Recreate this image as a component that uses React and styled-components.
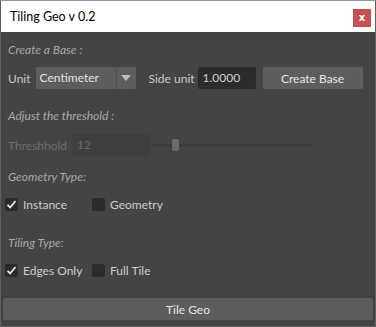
import React from 'react';
import styled, { createGlobalStyle } from 'styled-components';

const GlobalStyle = createGlobalStyle`
  html, body {
    margin: 0;
    padding: 0;
    background: #444444;
  }
  body {
    font-family: Lato, "Open Sans", sans-serif;
  }
`;

const Window = styled.div`
  box-sizing: border-box;
  width: 376px;
  height: 327px;
  display: flex;
  flex-direction: column;
  border: 1px solid #5f5f5f;
  border-top-color: #8a97a4;
  background: #444444;
  overflow: hidden;
`;

const TitleBar = styled.div`
  height: 31px;
  flex: none;
  background: #ffffff;
  display: flex;
  align-items: center;
  justify-content: space-between;
  padding: 0 4px 0 9px;
`;

const Title = styled.span`
  font-family: Lato, sans-serif;
  font-size: 12.5px;
  color: #000000;
`;

const CloseButton = styled.div`
  width: 18px;
  height: 18px;
  margin-top: 2px;
  background: #c75050;
  color: #ffffff;
  font-family: "DejaVu Sans", sans-serif;
  font-weight: bold;
  font-size: 10px;
  display: flex;
  align-items: center;
  justify-content: center;
`;

const Body = styled.div`
  flex: 1;
  display: flex;
  flex-direction: column;
  padding: 9px 2px 6px 2px;
`;

const SectionLabel = styled.div`
  font-style: italic;
  font-size: 12px;
  color: #a9a9a9;
  padding-left: 5px;
  height: 18px;
  line-height: 18px;
  margin-bottom: ${(p) => p.$gap || 0}px;
`;

const Row = styled.div`
  display: flex;
  align-items: center;
  height: 22px;
  padding-left: ${(p) => (p.$flush ? 0 : 5)}px;
  margin-bottom: ${(p) => p.$gap || 0}px;
`;

const Label = styled.span`
  font-size: 12px;
  color: ${(p) => (p.$disabled ? '#6c6c6c' : '#c8c8c8')};
  margin-right: ${(p) => p.$mr ?? 5}px;
`;

const Combo = styled.div`
  width: 100px;
  height: 22px;
  border-radius: 2px;
  background: #5d5d5d;
  display: flex;
  align-items: center;
  margin-right: 13px;
`;

const ComboValue = styled.span`
  flex: 1;
  font-size: 12px;
  color: #e2e2e2;
  padding-left: 4px;
  border-right: 1px solid #4e4e4e;
  height: 22px;
  line-height: 22px;
`;

const ComboArrow = styled.div`
  width: 19px;
  display: flex;
  align-items: center;
  justify-content: center;
`;

const TextInput = styled.div`
  width: ${(p) => p.$w}px;
  height: 22px;
  border-radius: 2px;
  background: ${(p) => (p.$disabled ? '#3f3f3f' : '#2b2b2b')};
  color: ${(p) => (p.$disabled ? '#6c6c6c' : '#cfcfcf')};
  font-size: 12px;
  line-height: 22px;
  padding-left: 5px;
  box-sizing: border-box;
  margin-right: ${(p) => p.$mr || 0}px;
`;

const Button = styled.div`
  height: 22px;
  width: ${(p) => (p.$w ? `${p.$w}px` : 'auto')};
  flex: ${(p) => (p.$w ? 'none' : '1')};
  border-radius: 2px;
  background: #5d5d5d;
  color: #e6e6e6;
  font-size: 12px;
  display: flex;
  align-items: center;
  justify-content: center;
`;

const Slider = styled.div`
  position: relative;
  width: 160px;
  height: 18px;
  margin-left: 3px;
  display: flex;
  align-items: center;
`;

const Track = styled.div`
  width: 100%;
  height: 3px;
  border-radius: 2px;
  background: #3d3d3d;
`;

const Thumb = styled.div`
  position: absolute;
  left: 19px;
  top: 3px;
  width: 7px;
  height: 12px;
  border-radius: 2px;
  background: #6a6a6a;
`;

const CheckRow = styled.div`
  display: flex;
  align-items: center;
  height: 14px;
  padding-left: 2px;
  margin-bottom: ${(p) => p.$gap || 0}px;
`;

const CheckItem = styled.div`
  display: flex;
  align-items: center;
  width: ${(p) => p.$w}px;
`;

const Box = styled.div`
  width: 13px;
  height: 13px;
  border-radius: 2px;
  background: #2b2b2b;
  display: flex;
  align-items: center;
  justify-content: center;
  margin-right: 5px;
`;

const CheckLabel = styled.span`
  font-size: 12px;
  color: #cdcdcd;
`;

const Spacer = styled.div`
  flex: 1;
`;

const Check = ({ checked, label, width }) => (
  <CheckItem $w={width}>
    <Box>
      {checked && (
        <svg width="11" height="11" viewBox="0 0 11 11">
          <path d="M1.5 5.8 L4.2 8.5 L9.5 2" fill="none" stroke="#e6e6e6" strokeWidth="1.8" />
        </svg>
      )}
    </Box>
    <CheckLabel>{label}</CheckLabel>
  </CheckItem>
);

export default function App() {
  return (
    <>
      <GlobalStyle />
      <Window>
        <TitleBar>
          <Title>Tiling Geo v 0.2</Title>
          <CloseButton>x</CloseButton>
        </TitleBar>
        <Body>
          <SectionLabel $gap={8}>Create a Base :</SectionLabel>
          <Row $gap={18}>
            <Label>Unit</Label>
            <Combo>
              <ComboValue>Centimeter</ComboValue>
              <ComboArrow>
                <svg width="10" height="6" viewBox="0 0 10 6">
                  <path d="M0 0 H10 L5 6 Z" fill="#bdbdbd" />
                </svg>
              </ComboArrow>
            </Combo>
            <Label $mr={3}>Side unit</Label>
            <TextInput $w={58} $mr={7}>1.0000</TextInput>
            <Button $w={100}>Create Base</Button>
          </Row>
          <SectionLabel $gap={9}>Adjust the threshold :</SectionLabel>
          <Row $gap={12}>
            <Label $disabled>Threshhold</Label>
            <TextInput $w={78} $disabled>12</TextInput>
            <Slider>
              <Track />
              <Thumb />
            </Slider>
          </Row>
          <SectionLabel $gap={11}>Geometry Type:</SectionLabel>
          <CheckRow $gap={23}>
            <Check checked label="Instance" width={87} />
            <Check label="Geometry" width={90} />
          </CheckRow>
          <SectionLabel $gap={11}>Tiling Type:</SectionLabel>
          <CheckRow>
            <Check checked label="Edges Only" width={87} />
            <Check label="Full Tile" width={90} />
          </CheckRow>
          <Spacer />
          <Row $flush>
            <Button>Tile Geo</Button>
          </Row>
        </Body>
      </Window>
    </>
  );
}
